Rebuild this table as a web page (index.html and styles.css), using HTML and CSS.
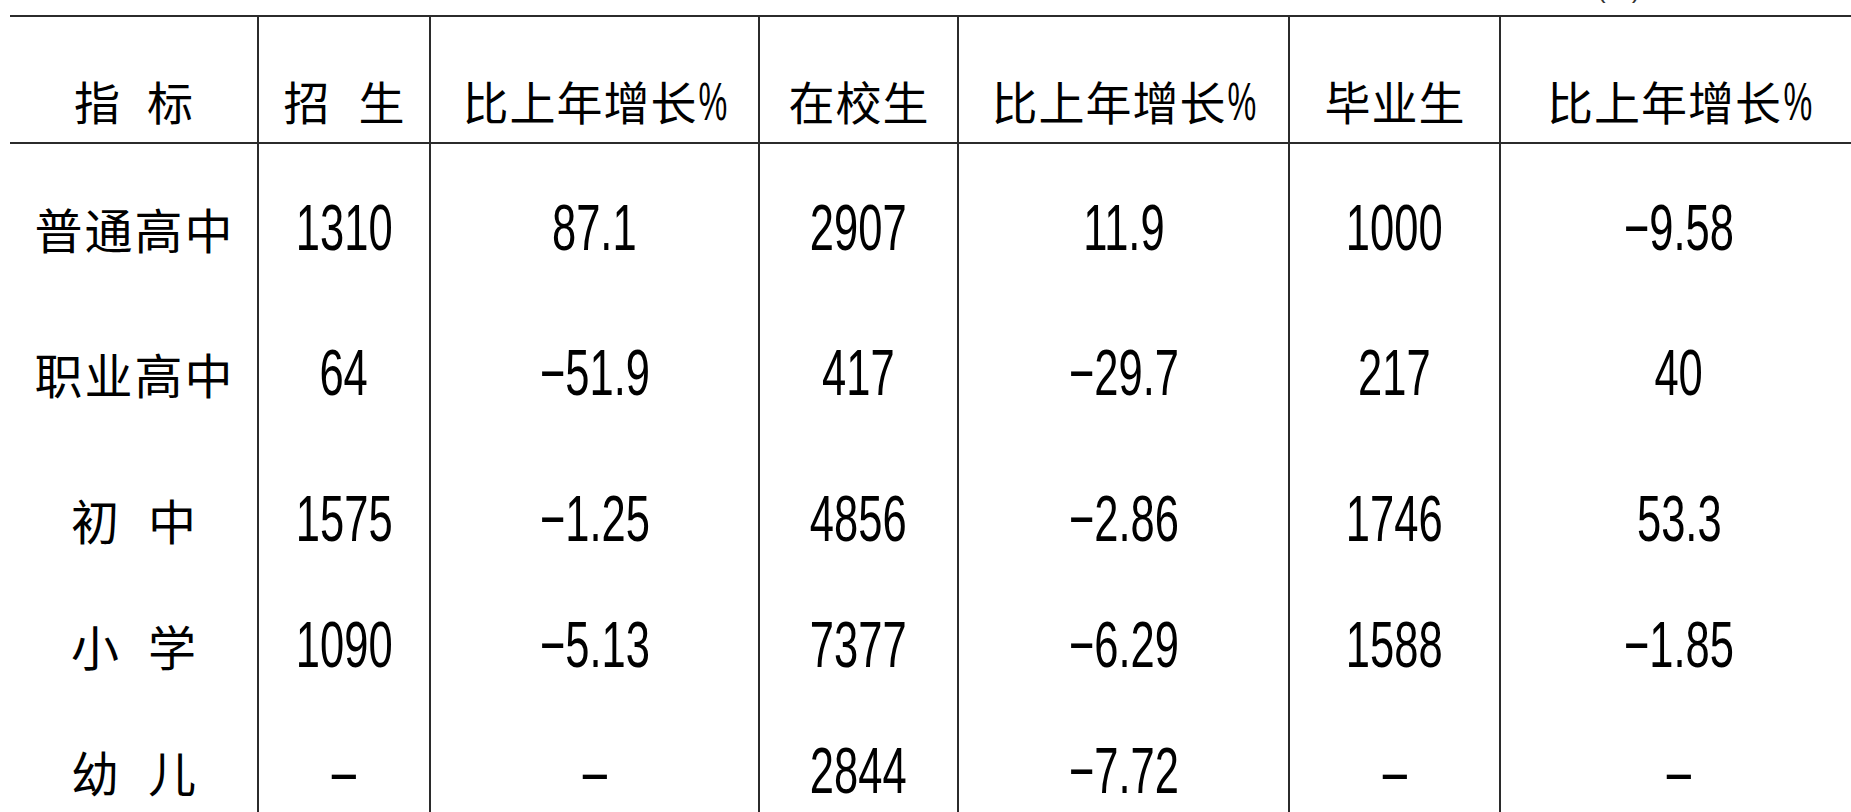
FILE: index.html
```html
<!DOCTYPE html>
<html lang="zh-CN">
<head>
<meta charset="utf-8">
<title>教育统计</title>
<link rel="stylesheet" href="styles.css">
</head>
<body>
<div class="unit"><span class="unit-text">(人)</span></div>
<div class="tbl">
  <div class="hd first"><span class="k2h">指标</span></div>
  <div class="hd bl"><span class="k2h wide">招生</span></div>
  <div class="hd bl"><span class="kh">比上年增长<span class="pct">%</span></span></div>
  <div class="hd bl"><span class="kh">在校生</span></div>
  <div class="hd bl"><span class="kh">比上年增长<span class="pct">%</span></span></div>
  <div class="hd bl"><span class="kh">毕业生</span></div>
  <div class="hd bl"><span class="kh">比上年增长<span class="pct">%</span></span></div>

  <div class="c"><span class="k4">普通高中</span></div>
  <div class="c bl"><span class="n">1310</span></div>
  <div class="c bl"><span class="n">87.1</span></div>
  <div class="c bl"><span class="n">2907</span></div>
  <div class="c bl"><span class="n">11.9</span></div>
  <div class="c bl"><span class="n">1000</span></div>
  <div class="c bl"><span class="n">−9.58</span></div>

  <div class="c"><span class="k4">职业高中</span></div>
  <div class="c bl"><span class="n">64</span></div>
  <div class="c bl"><span class="n">−51.9</span></div>
  <div class="c bl"><span class="n">417</span></div>
  <div class="c bl"><span class="n">−29.7</span></div>
  <div class="c bl"><span class="n">217</span></div>
  <div class="c bl"><span class="n">40</span></div>

  <div class="c"><span class="k2">初中</span></div>
  <div class="c bl"><span class="n">1575</span></div>
  <div class="c bl"><span class="n">−1.25</span></div>
  <div class="c bl"><span class="n">4856</span></div>
  <div class="c bl"><span class="n">−2.86</span></div>
  <div class="c bl"><span class="n">1746</span></div>
  <div class="c bl"><span class="n">53.3</span></div>

  <div class="c"><span class="k2">小学</span></div>
  <div class="c bl"><span class="n">1090</span></div>
  <div class="c bl"><span class="n">−5.13</span></div>
  <div class="c bl"><span class="n">7377</span></div>
  <div class="c bl"><span class="n">−6.29</span></div>
  <div class="c bl"><span class="n">1588</span></div>
  <div class="c bl"><span class="n">−1.85</span></div>

  <div class="c"><span class="k2">幼儿</span></div>
  <div class="c bl"><span class="n">–</span></div>
  <div class="c bl"><span class="n">–</span></div>
  <div class="c bl"><span class="n">2844</span></div>
  <div class="c bl"><span class="n">−7.72</span></div>
  <div class="c bl"><span class="n">–</span></div>
  <div class="c bl"><span class="n">–</span></div>
</div>
</body>
</html>
```

FILE: styles.css
```css
html, body {
  margin: 0;
  padding: 0;
  background: #ffffff;
}

body {
  width: 1851px;
  height: 812px;
  overflow: hidden;
  color: #000000;
  font-family: "Noto Sans CJK SC", "Noto Sans", sans-serif;
}

.unit {
  height: 15px;
  overflow: hidden;
  padding-left: 1597px;
}

.unit-text {
  display: block;
  margin-top: -24px;
  font-family: "Liberation Sans", "Noto Sans CJK SC", sans-serif;
  font-size: 26px;
  line-height: 26px;
  color: #333333;
}

.tbl {
  display: grid;
  margin-left: 10px;
  width: 1847px;
  grid-template-columns: 247px 172px 329px 199px 331px 211px 358px;
  grid-template-rows: 129px 145px 146px 126px 126px 126px;
}

.hd {
  box-sizing: border-box;
  border-top: 2px solid #2b2b2b;
  border-bottom: 2px solid #2b2b2b;
  padding-top: 53px;
  text-align: center;
  line-height: 60px;
  font-size: 46px;
  white-space: nowrap;
}

.c {
  box-sizing: border-box;
  padding-top: 54px;
  text-align: center;
  line-height: 60px;
  font-size: 48px;
  white-space: nowrap;
}

.bl {
  border-left: 2px solid #2b2b2b;
}

.kh {
  display: inline-block;
  letter-spacing: 1px;
  margin-right: -1px;
}

.k2h {
  display: inline-block;
  letter-spacing: 27px;
  margin-right: -27px;
}

.k2h.wide {
  letter-spacing: 29px;
  margin-right: -29px;
}

.k4 {
  display: inline-block;
  letter-spacing: 2px;
  margin-right: -2px;
}

.k2 {
  display: inline-block;
  letter-spacing: 29px;
  margin-right: -29px;
}

.pct {
  display: inline-block;
  font-family: "Liberation Sans", sans-serif;
  font-size: 54px;
  letter-spacing: 0;
  transform: scaleX(0.6);
  margin: 0 -10px 0 -8px;
}

.n {
  display: inline-block;
  font-family: "Liberation Sans", "Arial", sans-serif;
  font-size: 64px;
  transform: scaleX(0.68);
}
```
